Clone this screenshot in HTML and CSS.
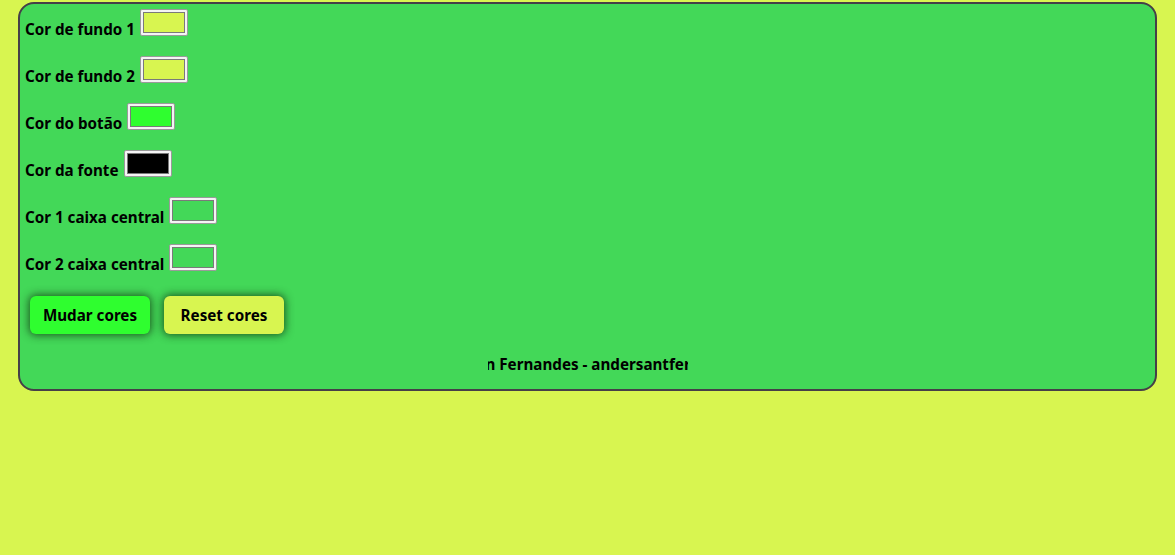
FILE: index.html
```html
<!DOCTYPE html>
<html lang="pt">
<head>
<meta charset="utf-8">
<title>Cores</title>
<link rel="stylesheet" href="styles.css">
</head>
<body>
<div class="panel">
  <div class="rows">
    <div class="row"><span class="label">Cor de fundo 1</span><span class="picker"><span class="swatch sw-yellow"></span></span></div>
    <div class="row"><span class="label">Cor de fundo 2</span><span class="picker"><span class="swatch sw-yellow"></span></span></div>
    <div class="row"><span class="label">Cor do botão</span><span class="picker"><span class="swatch sw-green"></span></span></div>
    <div class="row"><span class="label">Cor da fonte</span><span class="picker"><span class="swatch sw-black"></span></span></div>
    <div class="row"><span class="label">Cor 1 caixa central</span><span class="picker"><span class="swatch sw-panel"></span></span></div>
    <div class="row"><span class="label">Cor 2 caixa central</span><span class="picker"><span class="swatch sw-panel"></span></span></div>
  </div>
  <div class="buttons">
    <button class="btn btn-change">Mudar cores</button>
    <button class="btn btn-reset">Reset cores</button>
  </div>
  <div class="footer">
    <div class="marquee"><span class="marquee-text">Anderson Fernandes - andersantfernandes</span></div>
  </div>
</div>
</body>
</html>
```
FILE: styles.css
```css
html, body {
  margin: 0;
  padding: 0;
}
body {
  background: #d8f550;
  font-family: "Noto Sans", "Open Sans", sans-serif;
  font-weight: 700;
  font-size: 15.2px;
  color: #000;
  min-height: 555px;
  padding-top: 2px;
  box-sizing: border-box;
}
.panel {
  margin: 0 18px;
  background: #43d858;
  border: 2px solid #463f48;
  border-radius: 16px;
  height: 389px;
  box-sizing: border-box;
  padding: 5px 5px 0 5px;
  display: flex;
  flex-direction: column;
}
.rows {
  display: flex;
  flex-direction: column;
  gap: 20px;
}
.row {
  display: flex;
  align-items: flex-end;
  gap: 5px;
  height: 27px;
}
.label {
  line-height: 18px;
  margin-bottom: -2px;
}
.picker {
  width: 48px;
  height: 27px;
  box-sizing: border-box;
  border: 1px solid #9a9a9a;
  border-radius: 2px;
  background: #f4f4f4;
  padding: 2px;
  display: flex;
}
.swatch {
  flex: 1;
  border: 1px solid #7a7a7a;
}
.sw-yellow { background: #d8f550; }
.sw-green { background: #2ffe2f; }
.sw-black { background: #000; }
.sw-panel { background: #43d858; }
.buttons {
  display: flex;
  gap: 14px;
  margin-top: 25px;
  padding-left: 5px;
}
.btn {
  width: 120px;
  height: 38px;
  border: none;
  border-radius: 6px;
  font-family: inherit;
  font-weight: 700;
  font-size: 15.2px;
  color: #000;
  box-shadow: 0 0 8px 1px rgba(20, 60, 20, 0.85);
  cursor: pointer;
}
.btn-change { background: #2ffe2f; }
.btn-reset { background: #d8f550; }
.footer {
  display: flex;
  justify-content: center;
  margin-top: 20px;
}
.marquee {
  width: 200px;
  overflow: hidden;
  white-space: nowrap;
  line-height: 20px;
}
.marquee-text {
  display: inline-block;
  margin-left: -65px;
}
```
